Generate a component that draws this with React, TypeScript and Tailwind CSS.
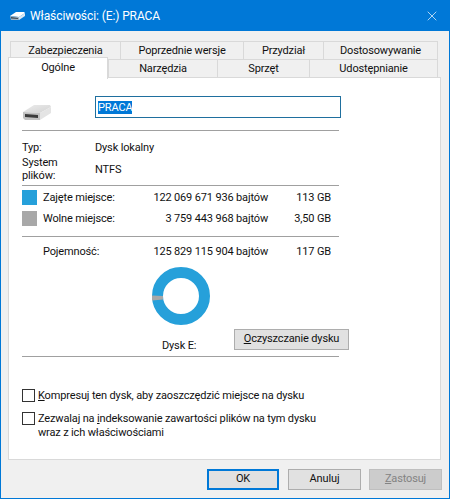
import { X } from 'lucide-react'

function BigDrive() {
  return (
    <svg width="28" height="15" viewBox="0 0 28 15" className="block">
      <defs>
        <linearGradient id="driveTop" x1="0" y1="0" x2="1" y2="1">
          <stop offset="0" stopColor="#ececec" />
          <stop offset="1" stopColor="#d2d2d2" />
        </linearGradient>
      </defs>
      <path d="M0 7 L11 0 L27 0 L28 2 L17 8 Z" fill="url(#driveTop)" />
      <path d="M0 7 L17 8 L17 15 L2 15 L0 13 Z" fill="#c2c2c2" />
      <path d="M17 8 L28 2 L28 8 L17 15 Z" fill="#e4e4e4" />
      <path d="M2 9 L15 10 L15 13 L2 12 Z" fill="#3c3c3c" />
    </svg>
  )
}

function SmallDrive() {
  return (
    <svg width="15" height="8" viewBox="0 0 15 8" className="block">
      <path d="M0 4 L6 0 L14 0 L15 1 L9 5 Z" fill="#ffffff" />
      <path d="M0 4 L9 5 L9 8 L1 8 Z" fill="#9fb4c6" />
      <path d="M9 5 L15 1 L15 4 L9 8 Z" fill="#d9e8f5" />
      <path d="M1 5 L8 6 L8 7 L1 6.5 Z" fill="#3f4b55" />
    </svg>
  )
}

function Tab({ label, w, selected }: { label: string; w: string; selected?: boolean }) {
  return (
    <div
      className={`flex justify-center border-[#d9d9d9] ${w} ${
        selected
          ? 'relative z-10 -mt-[2px] -mb-[2px] h-[22px] border-l border-r border-t bg-white pt-[1px]'
          : 'h-[18px] border-l border-t last:border-r bg-[#f0f0f0]'
      }`}
    >
      {label}
    </div>
  )
}

function Rule() {
  return <div className="h-px w-[317px] bg-[#a0a0a0]" />
}

function SpaceRow({ color, label, bytes, size }: { color: string; label: string; bytes: string; size: string }) {
  return (
    <div className="flex h-[15px] items-center">
      {color ? <div className={`h-[15px] w-[15px] ${color}`} /> : <div className="w-[15px]" />}
      <div className="ml-[6px] w-[80px] whitespace-nowrap pt-px">{label}</div>
      <div className="w-[145px] whitespace-nowrap pt-px text-right">{bytes}</div>
      <div className="w-[63px] whitespace-nowrap pt-px text-right">{size}</div>
    </div>
  )
}

function Check({ children }: { children: React.ReactNode }) {
  return (
    <div className="flex">
      <div className="h-[13px] w-[13px] shrink-0 border border-[#333333] bg-white" />
      <div className="ml-[3px] leading-[14px]">{children}</div>
    </div>
  )
}

export default function App() {
  return (
    <div className="flex h-[499px] w-[450px] flex-col border border-[#0078d7] bg-[#f0f0f0] text-[11px] tracking-[-0.15px] text-[#111111] [font-family:Roboto,sans-serif]">
      {/* pasek tytułu */}
      <div className="flex h-[30px] shrink-0 items-center bg-[#0078d7] px-[9px] text-white">
        <SmallDrive />
        <span className="ml-[5px] text-[12px] tracking-[-0.1px]">Właściwości: (E:) PRACA</span>
        <X className="ml-auto" size={16} strokeWidth={1.2} color="#dcecf9" />
      </div>

      {/* zakładki */}
      <div className="mt-[10px] ml-[9px] flex w-[428px] leading-[17px]">
        <Tab label="Zabezpieczenia" w="w-[110px]" />
        <Tab label="Poprzednie wersje" w="w-[123px]" />
        <Tab label="Przydział" w="w-[80px]" />
        <Tab label="Dostosowywanie" w="w-[115px]" />
      </div>
      <div className="ml-[7px] flex w-[430px] leading-[17px]">
        <Tab label="Ogólne" w="w-[100px]" selected />
        <Tab label="Narzędzia" w="w-[109px]" />
        <Tab label="Sprzęt" w="w-[92px]" />
        <Tab label="Udostępnianie" w="w-[129px]" />
      </div>

      {/* panel */}
      <div className="ml-[7px] flex h-[383px] w-[433px] flex-col border border-[#d9d9d9] bg-white pl-[13px]">
        <div className="mt-[18px] flex h-[22px]">
          <div className="ml-[1px] mt-[9px] w-[72px]">
            <BigDrive />
          </div>
          <div className="flex h-[22px] w-[246px] items-center border border-[#1f6f9e] pl-[2px]">
            <span className="bg-[#0078d7] leading-[13px] text-white">PRACA</span>
          </div>
        </div>

        <div className="mt-[12px]">
          <Rule />
        </div>

        <div className="mt-[10px] flex leading-[14px]">
          <div className="w-[73px]">Typ:</div>
          <div>Dysk lokalny</div>
        </div>
        <div className="mt-[1px] flex items-center leading-[13px]">
          <div className="w-[73px]">
            System
            <br />
            plików:
          </div>
          <div>NTFS</div>
        </div>

        <div className="mt-[3px]">
          <Rule />
        </div>

        <div className="mt-[4px] flex flex-col gap-[6px]">
          <SpaceRow color="bg-[#26a0da]" label="Zajęte miejsce:" bytes="122 069 671 936 bajtów" size="113 GB" />
          <SpaceRow color="bg-[#a8a8a8]" label="Wolne miejsce:" bytes="3 759 443 968 bajtów" size="3,50 GB" />
        </div>

        <div className="mt-[10px]">
          <Rule />
        </div>

        <div className="mt-[7px]">
          <SpaceRow color="" label="Pojemność:" bytes="125 829 115 904 bajtów" size="117 GB" />
        </div>

        <div className="ml-[130px] mt-[8px]">
          <svg width="58" height="58" viewBox="0 0 58 58" className="block">
            <circle cx="29" cy="29" r="23.5" fill="none" stroke="#26a0da" strokeWidth="11" />
            <path d="M0 33.5 L11 32.5 L11 29 L0 28.5 Z" fill="#a8a8a8" />
          </svg>
        </div>

        <div className="mt-[4px] flex h-[27px] items-start">
          <div className="ml-[140px] mt-[9px] w-[72px]">Dysk E:</div>
          <div className="flex h-[21px] w-[115px] items-center justify-center border border-[#adadad] bg-[#e1e1e1]">
            <span>
              <span className="underline">O</span>czyszczanie dysku
            </span>
          </div>
        </div>

        <Rule />

        <div className="mt-[32px] flex flex-col gap-[9px]">
          <Check>
            <span className="underline">K</span>ompresuj ten dysk, aby zaoszczędzić miejsce na dysku
          </Check>
          <Check>
            Zezwalaj na <span className="underline">i</span>ndeksowanie zawartości plików na tym dysku
            <br />
            wraz z ich właściwościami
          </Check>
        </div>
      </div>

      {/* przyciski */}
      <div className="mt-[9px] flex gap-[9px] pl-[206px]">
        <button className="h-[21px] w-[72px] border-2 border-[#0078d7] bg-[#e1e1e1] text-[#111111]">OK</button>
        <button className="-mr-px h-[21px] w-[73px] border border-[#adadad] bg-[#e1e1e1] text-[#111111]">Anuluj</button>
        <button className="h-[21px] w-[73px] border border-[#bfbfbf] bg-[#cccccc] text-[#838383]">
          <span className="underline">Z</span>astosuj
        </button>
      </div>
    </div>
  )
}
